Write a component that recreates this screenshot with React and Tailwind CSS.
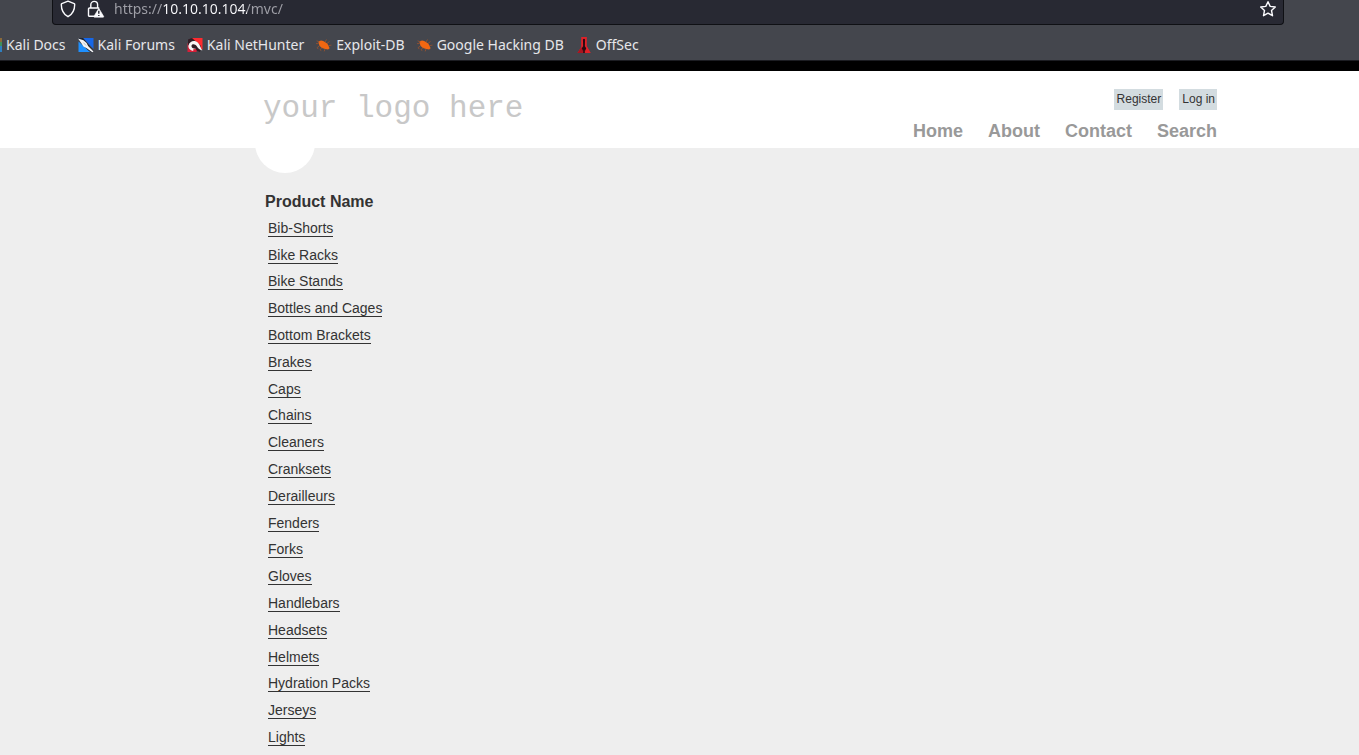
import React from "react";

const products = [
  "Bib-Shorts",
  "Bike Racks",
  "Bike Stands",
  "Bottles and Cages",
  "Bottom Brackets",
  "Brakes",
  "Caps",
  "Chains",
  "Cleaners",
  "Cranksets",
  "Derailleurs",
  "Fenders",
  "Forks",
  "Gloves",
  "Handlebars",
  "Headsets",
  "Helmets",
  "Hydration Packs",
  "Jerseys",
  "Lights",
];

function ShieldIcon() {
  return (
    <svg width="16" height="18" viewBox="0 0 16 18" fill="none" stroke="#fbfbfe" strokeWidth="1.4" strokeLinejoin="round" aria-hidden="true">
      <path d="M8 1.2 14.2 3.6c.4.2.5.4.5.8 0 5.400-2.300 9.800-6.700 12.300C3.600 14.200 1.300 9.800 1.300 4.400c0-.4.1-.6.5-.8Z" />
    </svg>
  );
}

function LockWarningIcon() {
  return (
    <svg width="18" height="18" viewBox="0 0 18 18" fill="none" aria-hidden="true">
      <path d="M3.800 8V4.800a3.400 3.400 0 0 1 6.800 0V8" stroke="#fbfbfe" strokeWidth="1.400" />
      <path d="M7 16.300H2.500a1 1 0 0 1-1-1V9a1 1 0 0 1 1-1h9.200" stroke="#fbfbfe" strokeWidth="1.400" strokeLinecap="round" />
      <path d="M11.800 8.300 16.600 16.300a.6.6 0 0 1-.5.900H7.500a.6.6 0 0 1-.5-.9Z" fill="#fbfbfe" stroke="#fbfbfe" strokeWidth=".6" strokeLinejoin="round" />
      <path d="M11.800 10.800v3M11.800 14.900v1.200" stroke="#282933" strokeWidth="1.400" />
    </svg>
  );
}

function StarIcon() {
  return (
    <svg width="18" height="18" viewBox="0 0 18 18" fill="none" stroke="#fbfbfe" strokeWidth="1.400" strokeLinejoin="round" aria-hidden="true">
      <path d="m9 1.700 2.200 4.700 5.100.6-3.800 3.500 1 5.200L9 13.200l-4.500 2.500 1-5.200L1.700 7l5.100-.6Z" />
    </svg>
  );
}

function DocsIcon() {
  return (
    <svg width="16" height="16" viewBox="0 0 16 16" aria-hidden="true">
      <path d="M2 1h14v5H2z" fill="#8a6a3a" />
      <path d="M2 5h14v4H2z" fill="#3f8f5a" />
      <path d="M2 9h14v6H2z" fill="#2f7fc0" />
    </svg>
  );
}

function ForumsIcon() {
  return (
    <svg width="16" height="16" viewBox="0 0 16 16" aria-hidden="true">
      <path d="M5 1h10.500v11Z" fill="#1667e8" />
      <path d="M.5 4.500 12 15H.5Z" fill="#1e90ff" />
      <path d="M0 1.200 5 1l10.500 13-1.500 1.500L10 13 5.500 8.500Z" fill="#1b2434" />
      <path d="M0 1.500 5.500 3.200 8.600 6l1.500 3 5.400 5.600-1.200.6-5.600-3.900-3.300-1.700-1.800-3.200Z" fill="#f4f4f4" />
      <path d="m5.400 5.600 2.800 3" stroke="#9aa6b6" strokeWidth=".7" />
    </svg>
  );
}

function NetHunterIcon() {
  return (
    <svg width="16" height="16" viewBox="0 0 16 16" aria-hidden="true">
      <path d="M4 1h11.500v12Z" fill="#ff2a2f" />
      <path d="M.5 6 10 15H.5Z" fill="#d81f38" />
      <path d="M1 2.500 5 1l9 8-1 6-5-2-7-5Z" fill="#321c24" />
      <path d="M1.500 8.500C2.500 3.800 8 2.700 11 5.700c2 2 2.500 5 4.300 7.900-3-1.100-4.400-2.600-5.700-4.600C8.300 7 5.200 6.300 4.500 8.700c-.4 1.800 1.600 3 4.200 3.100l-.5 2.200c-4.100 0-7.300-2-6.700-5.500Z" fill="#f8f4f4" />
      <path d="m6 12.600 2.700-.8 1.300 2.400-3.500.4Z" fill="#d81f38" />
    </svg>
  );
}

function BugIcon() {
  return (
    <svg width="16" height="16" viewBox="0 0 16 16" aria-hidden="true">
      <path d="M2.500 5.500C3 3.700 5 3 7.200 4.100l4 2.300 1.200 2 1.200 2.800-1.500 1.300-2.800-.5-3.500-1.100L3.500 8.800Z" fill="#f26711" />
      <path d="M3.500 5 .6 3.800M2.500 6.600H0M3.500 8.800l-2.300 1.800 1 1.500M6 10.500l-2 2.300 1.300.8M9 12l-.8 2.400M9 5l1.500-2.500M11 6.400l2.500-1.900M12.500 8.700l3-.6" fill="none" stroke="#a8552a" strokeWidth=".7" />
    </svg>
  );
}

function OffSecIcon() {
  return (
    <svg width="16" height="18" viewBox="0 0 16 18" aria-hidden="true">
      <path d="M5.200 1h5.600v9l4 7H1.500l3.700-6Z" fill="#e02128" />
      <path d="m5.200 11 2.800 6H1.500Z" fill="#a91520" />
      <path d="M8 2.800c1 0 1.300 1 1 2.200L8.900 10.200l1.300 2-.9 2.300H8.800V17H7.200v-2.500h-.5l-.9-2.300 1.300-2L7 5c-.3-1.200 0-2.200 1-2.200Z" fill="#260a10" />
    </svg>
  );
}

const bookmarks = [
  { label: "Kali Docs", Icon: DocsIcon },
  { label: "Kali Forums", Icon: ForumsIcon },
  { label: "Kali NetHunter", Icon: NetHunterIcon },
  { label: "Exploit-DB", Icon: BugIcon },
  { label: "Google Hacking DB", Icon: BugIcon },
  { label: "OffSec", Icon: OffSecIcon },
];

function BrowserChrome() {
  return (
    <div className="overflow-hidden border-b border-[#1c1d22] bg-[#44464d] font-['Noto_Sans',sans-serif] text-[#fbfbfe]">
      <div className="ml-[52px] mr-[75px] flex h-[25px] items-start rounded-b border border-t-0 border-[#0f1014] bg-[#282933] px-[6px]">
        <button type="button" aria-label="Tracking protection" className="ml-px flex">
          <ShieldIcon />
        </button>
        <button type="button" aria-label="Connection is not secure" className="ml-[11px] flex">
          <LockWarningIcon />
        </button>
        <input
          type="text"
          aria-label="Address"
          defaultValue="https://10.10.10.104/mvc/"
          className="ml-[9px] h-[18px] min-w-0 flex-1 bg-[linear-gradient(90deg,#a0a0a8_48px,#fbfbfe_48px,#fbfbfe_133px,#a0a0a8_133px)] bg-clip-text text-[14px] leading-[18px] text-transparent outline-none"
        />
        <button type="button" aria-label="Bookmark this page" className="flex">
          <StarIcon />
        </button>
      </div>
      <nav aria-label="Bookmarks" className="-ml-3.5 flex h-[35px] items-center gap-3 pt-1">
        {bookmarks.map(({ label, Icon }) => (
          <a key={label} href="#" className="flex items-center gap-1 whitespace-nowrap text-[14px] leading-5 text-[#e6e6ea]">
            <Icon />
            {label}
          </a>
        ))}
      </nav>
    </div>
  );
}

function SiteHeader() {
  return (
    <header className="border-t-[10px] border-black bg-white">
      <div className="relative flex h-[77px] justify-between pl-[263px] pr-[142px]">
        <a href="#" className="mt-[18px] whitespace-nowrap font-['Liberation_Mono',monospace] text-[31px] leading-10 text-[#c8c8c8]">
          your logo here
        </a>
        <div className="flex flex-col items-end pt-[18px]">
          <div className="flex gap-4 text-[12px] leading-[21px] text-[#333]">
            <a href="#" className="bg-[#d3dce0] pl-[3px] pr-[2px]">Register</a>
            <a href="#" className="bg-[#d3dce0] pl-[3px] pr-[2px]">Log in</a>
          </div>
          <nav aria-label="Main" className="mt-[10px] flex gap-[25px] text-[18px] font-bold leading-[22px] text-[#999]">
            <a href="#">Home</a>
            <a href="#">About</a>
            <a href="#">Contact</a>
            <a href="#">Search</a>
          </nav>
        </div>
        <div className="absolute left-[255px] top-full h-[25px] w-[60px] overflow-hidden">
          <div className="-mt-[35px] size-[60px] rounded-full bg-white" />
        </div>
      </div>
    </header>
  );
}

export default function App() {
  return (
    <div className="h-screen overflow-hidden bg-[#eee] font-['Liberation_Sans',Arial,sans-serif] text-[#333]">
      <BrowserChrome />
      <SiteHeader />
      <main className="pl-[265px] pt-[41px]">
        <table className="h-[562px] border-collapse text-left">
          <thead>
            <tr>
              <th className="h-[26px] p-0 align-middle text-[16px] font-bold leading-[26px]">Product Name</th>
            </tr>
          </thead>
          <tbody>
            {products.map((name) => (
              <tr key={name}>
                <td className="p-0 pl-[3px] align-middle text-[14px] leading-4">
                  <a href="#" className="inline-block border-b border-[#333] leading-[15px]">{name}</a>
                </td>
              </tr>
            ))}
          </tbody>
        </table>
      </main>
    </div>
  );
}
